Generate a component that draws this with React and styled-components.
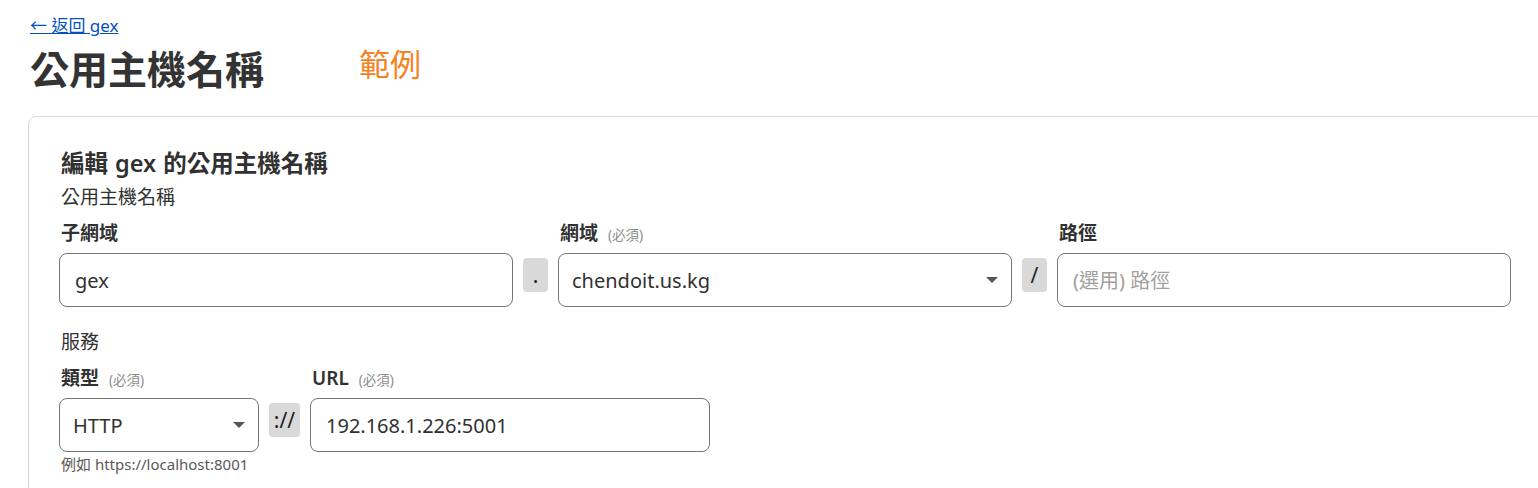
import styled, { createGlobalStyle } from "styled-components";

const GlobalStyle = createGlobalStyle`
    body {
        margin: 0;
        background: #fff;
        color: #313131;
        font-family: "Noto Sans", "Noto Sans CJK TC", sans-serif;
        overflow: hidden;
    }
`;

const Page = styled.div`
    padding: 13px 0 0 30px;
    width: 1600px;
`;

const BackLink = styled.a`
    display: inline-block;
    font-size: 17px;
    line-height: 26px;
    color: #0051c3;
    text-decoration: underline;
`;

const TitleRow = styled.div`
    display: flex;
    align-items: flex-start;
    gap: 95px;
    margin: 3px 0 20px;
`;

const Title = styled.h1`
    margin: 0;
    font-size: 39px;
    line-height: 54px;
    font-weight: 600;
    color: #333;
`;

const Badge = styled.span`
    font-size: 31px;
    line-height: 44px;
    color: #f6821f;
`;

const Card = styled.div`
    margin-left: -2px;
    border: 1px solid #d9d9d9;
    border-radius: 8px;
    padding: 30px 32px 40px;
`;

const CardHeading = styled.h2`
    margin: 0 0 4px;
    font-size: 23.5px;
    line-height: 32px;
    font-weight: 600;
    word-spacing: 1px;
    color: #313131;
`;

const Section = styled.div`
    font-size: 19px;
    line-height: 28px;
    margin-top: ${(p) => p.$top || 0}px;
`;

const FieldGrid = styled.div`
    display: grid;
    grid-template-columns: ${(p) => p.$cols};
    grid-template-rows: auto auto;
    column-gap: 10px;
    margin-left: -2px;
`;

const Label = styled.label`
    grid-row: 1;
    font-size: 19px;
    line-height: 28px;
    font-weight: 600;
    margin: 8px 0 4px 2px;
    color: #313131;
`;

const Required = styled.span`
    font-size: 13.5px;
    font-weight: 400;
    color: #8c8c8c;
    margin-left: 10px;
`;

const Input = styled.input`
    grid-row: 2;
    box-sizing: border-box;
    width: 100%;
    height: 54px;
    border: 1px solid #757575;
    border-radius: 8px;
    padding: 0 15px;
    font-family: inherit;
    font-size: 20px;
    color: #313131;
    background: #fff;
    outline: none;

    &::placeholder {
        color: #a0a0a0;
    }
`;

const SelectBox = styled.div`
    grid-row: 2;
    box-sizing: border-box;
    height: 54px;
    border: 1px solid #757575;
    border-radius: 8px;
    padding: 0 13px;
    display: flex;
    align-items: center;
    justify-content: space-between;
    font-size: 20px;
    color: #313131;
`;

const Caret = styled.span`
    width: 0;
    height: 0;
    border-left: 6px solid transparent;
    border-right: 6px solid transparent;
    border-top: 6px solid #555;
`;

const Sep = styled.div`
    grid-row: 2;
    align-self: start;
    margin-top: 5px;
    height: 34px;
    border-radius: 4px;
    background: #d9d9d9;
    display: flex;
    align-items: center;
    justify-content: center;
    font-size: 21px;
    color: #222;
`;

const Hint = styled.div`
    font-size: 15px;
    line-height: 20px;
    margin: 2px 0 0;
    color: #595959;
`;

function Select({ value }) {
    return (
        <SelectBox>
            <span>{value}</span>
            <Caret />
        </SelectBox>
    );
}

export default function App() {
    return (
        <>
            <GlobalStyle />
            <Page>
                <BackLink href="#">← 返回 gex</BackLink>
                <TitleRow>
                    <Title>公用主機名稱</Title>
                    <Badge>範例</Badge>
                </TitleRow>
                <Card>
                    <CardHeading>編輯 gex 的公用主機名稱</CardHeading>
                    <Section>公用主機名稱</Section>
                    <FieldGrid $cols="454px 25px 454px 25px 454px">
                        <Label>子網域</Label>
                        <Label style={{ gridColumn: 3 }}>
                            網域<Required>(必須)</Required>
                        </Label>
                        <Label style={{ gridColumn: 5 }}>路徑</Label>
                        <Input defaultValue="gex" />
                        <Sep>.</Sep>
                        <Select value="chendoit.us.kg" />
                        <Sep>/</Sep>
                        <Input placeholder="(選用) 路徑" />
                    </FieldGrid>
                    <Section $top={21}>服務</Section>
                    <FieldGrid $cols="200px 31px 400px">
                        <Label>
                            類型<Required>(必須)</Required>
                        </Label>
                        <Label style={{ gridColumn: 3 }}>
                            URL<Required>(必須)</Required>
                        </Label>
                        <Select value="HTTP" />
                        <Sep>://</Sep>
                        <Input defaultValue="192.168.1.226:5001" />
                    </FieldGrid>
                    <Hint>例如 https://localhost:8001</Hint>
                </Card>
            </Page>
        </>
    );
}
